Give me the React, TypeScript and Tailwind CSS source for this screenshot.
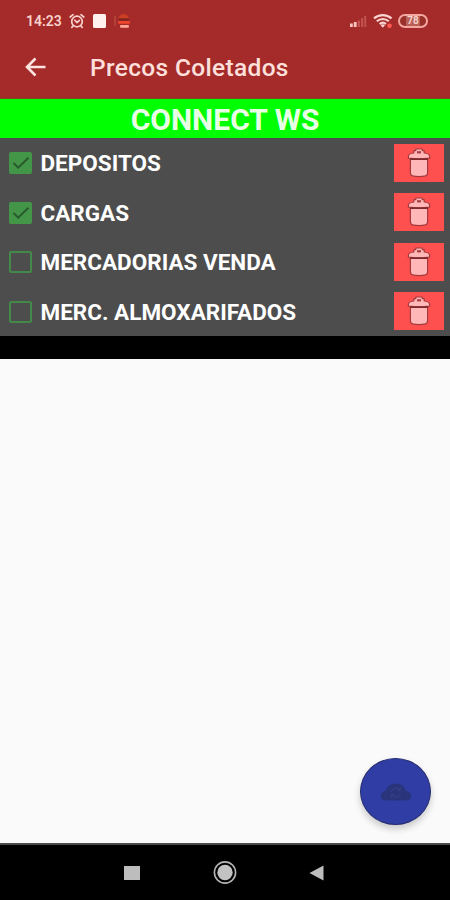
import { useState } from 'react';

interface Table {
  id: string;
  label: string;
  checked: boolean;
}

const initialTables: Table[] = [
  { id: 'depositos', label: 'DEPOSITOS', checked: true },
  { id: 'cargas', label: 'CARGAS', checked: true },
  { id: 'mercadorias', label: 'MERCADORIAS VENDA', checked: false },
  { id: 'almoxarifados', label: 'MERC. ALMOXARIFADOS', checked: false },
];

function StatusBar() {
  return (
    <div className="flex h-[42px] items-center justify-between pl-[26px] pr-[22px] text-[#f8d2cc]">
      <div className="flex items-center">
        <span className="w-[37px] whitespace-nowrap text-[14px] font-semibold leading-none">14:23</span>
        <svg className="ml-[6px]" width="16" height="16" viewBox="0 0 16 16" fill="none" stroke="currentColor" strokeWidth="1.7" strokeLinecap="round">
          <circle cx="8" cy="8.5" r="5.3" />
          <path d="M1.2 4 4 1.7M14.8 4 12 1.7M5.8 7.2 8 9.6l2.4-2.2M4 13l-1.2 1.4M12 13l1.2 1.4" />
        </svg>
        <span className="ml-[8px] h-[14px] w-[13px] rounded-[1.5px] bg-[#fff1ed]" />
        <svg className="ml-[8px]" width="16" height="16" viewBox="0 0 16 16">
          <path d="M1 3v10" stroke="#c4564b" strokeWidth="1" />
          <path d="M4.5 5.2C5 2.7 7 1 9.7 1s4.7 1.7 5.2 4.2z" fill="#cb3f24" />
          <rect x="5" y="5.5" width="10" height="2.4" fill="#7f2720" />
          <rect x="4" y="8" width="12" height="2.8" rx="1" fill="#f0442d" />
          <rect x="6" y="12" width="9" height="2.8" rx="1.2" fill="#ffa795" />
        </svg>
      </div>
      <div className="flex items-center">
        <svg width="18" height="13" viewBox="0 0 18 13">
          <path d="M1 8.5h2.8V12H1zM4.8 7h2.8v5H4.8z" fill="#f9c5bf" />
          <path d="M8.6 5.5h2.4V12H8.6zM12 3h2.2v9H12zM15.2 1h2v11h-2z" fill="#c05350" />
        </svg>
        <svg className="ml-[6px]" width="20" height="16" viewBox="0 0 20 16" fill="none">
          <path d="M1 5.4c5-4.5 12.5-4.5 17.5 0M3.8 8.3c3.5-3.1 8.5-3.1 12 0M6.6 11c2-1.7 4.4-1.7 6.4 0" stroke="#fad5d0" strokeWidth="2.2" />
          <path d="m7.5 12.1 2.3 2.6 2.3-2.6c-1.4-1-3.2-1-4.6 0z" fill="#fad5d0" />
          <circle cx="16.5" cy="12.8" r="2.3" fill="#ff5a50" />
        </svg>
        <div className="ml-[5px] flex h-[14px] w-[30px] items-center justify-center rounded-full border-2 border-[#f4a7a0] bg-[#993029] text-[10px] font-bold leading-none">
          <span className="h-full bg-[#b86058] px-px leading-[10px]">78</span>
        </div>
      </div>
    </div>
  );
}

function Header() {
  return (
    <header className="h-[99px] border-b border-[#7e4b16] bg-[#a52a2a]">
      <StatusBar />
      <div className="flex h-[50px] items-center pl-[25px]">
        <svg width="22" height="22" viewBox="0 0 22 22" fill="none" stroke="#fde3df" strokeWidth="2.6">
          <path d="M20.5 11h-18M10.5 2.5 2 11l8.5 8.5" />
        </svg>
        <h1 className="ml-[43px] mt-[2px] whitespace-nowrap text-[24.5px] font-medium leading-none tracking-[0.33px] text-[#fde0dc]">Precos Coletados</h1>
      </div>
    </header>
  );
}

function TrashIcon() {
  return (
    <svg width="24" height="32" viewBox="0 0 24 32" fill="#ffb7b7" stroke="#a5393c" strokeWidth="1.2" strokeLinejoin="round">
      <path d="M3.4 12h17.2v13.8c0 2-1 3.100-3 3.400-3.600.5-7.600.5-11.200 0-2-.3-3-1.400-3-3.400z" />
      <path d="M6.800 6V3.600h2V2h6.400v1.600h2V6c3.200.3 5.200 1.300 5.400 3.100v2.100c-6.600.8-14.600.8-21.200 0V9.100C1.600 7.300 3.600 6.300 6.800 6z" />
      <path d="M10 4.200h4v2.200h-4z" fill="#a53c3f" stroke="none" />
      <path d="M3 12.200h18" stroke="#7c2a2d" strokeWidth="1.600" />
    </svg>
  );
}

function TableRow({ table, onToggle }: { table: Table; onToggle: () => void }) {
  return (
    <li className="flex h-[49.5px] items-center pl-[9px] pr-[6px]">
      <button
        role="checkbox"
        aria-checked={table.checked}
        aria-label={table.label}
        onClick={onToggle}
        className={`mt-px flex h-[22px] w-[23px] items-center justify-center rounded-[2px] border-2 ${
          table.checked ? 'border-[#439548] bg-[#439548]' : 'border-[#43894a]'
        }`}
      >
        {table.checked && (
          <svg className="shrink-0" width="18" height="14" viewBox="0 0 18 14" fill="none" stroke="#285b2c" strokeWidth="2">
            <path d="m1.5 7 4.7 4.7L16.5 1.8" />
          </svg>
        )}
      </button>
      <span className="ml-[8.5px] mt-[1.5px] flex-1 whitespace-nowrap text-[22.5px] font-bold leading-none text-white">{table.label}</span>
      <button aria-label="Excluir" className="flex h-[38px] w-[50px] items-center justify-center bg-[#ff5050]">
        <TrashIcon />
      </button>
    </li>
  );
}

function NavigationBar() {
  return (
    <nav className="flex h-[57px] items-center border-t-2 border-[#4a4a4a] bg-black pl-[124px]">
      <span className="h-[14px] w-[16px] bg-[#bdbdbd]" />
      <svg className="ml-[73px]" width="24" height="24" viewBox="0 0 24 24">
        <circle cx="12" cy="11.5" r="10.6" fill="none" stroke="#b5b5b5" strokeWidth="1.6" />
        <circle cx="12" cy="11.5" r="7.7" fill="#c2c2c2" />
      </svg>
      <svg className="ml-[72px]" width="15" height="16" viewBox="0 0 15 16">
        <path d="M.5 8 14.5.5v15z" fill="#bdbdbd" />
      </svg>
    </nav>
  );
}

export default function App() {
  const [tables, setTables] = useState(initialTables);

  const toggle = (id: string) =>
    setTables((list) => list.map((t) => (t.id === id ? { ...t, checked: !t.checked } : t)));

  return (
    <div className="flex h-[900px] w-[450px] flex-col overflow-hidden bg-[#fafafa] font-[Roboto,'Liberation_Sans',sans-serif]">
      <Header />
      <button className="h-[39px] shrink-0 bg-[#00ff00] pt-[3px] text-[30px] font-bold leading-none text-[#e9ffe5]">CONNECT WS</button>
      <ul className="h-[198px] shrink-0 bg-[#4d4d4d]">
        {tables.map((table) => (
          <TableRow key={table.id} table={table} onToggle={() => toggle(table.id)} />
        ))}
      </ul>
      <div className="h-[23px] shrink-0 bg-black" />
      <main className="flex flex-1 items-end justify-end pb-[18px] pr-[19px]">
        <button aria-label="Enviar" className="flex h-[67px] w-[71px] items-center justify-center rounded-[50%] border border-[#252b70] bg-[#2f3da4] shadow-[0_4px_7px_rgba(0,0,0,0.2)]">
          <svg width="32" height="20" viewBox="0 0 32 20">
            <path d="M7 18.5c-3.500 0-6-2-6-4.800 0-2.600 2-4.500 4.800-4.900C7.300 4.500 11 1.500 16 1.500s8.700 3 9.700 7.300c3.100.2 5.300 2.200 5.300 4.900 0 2.800-2.400 4.800-5.500 4.800z" fill="#29347a" />
            <path d="M11.5 10a4.700 4.700 0 0 1 8.500-2M20.500 11a4.700 4.700 0 0 1-8.500 2M20.500 5v3.500H17M11.500 16v-3.500H15" fill="none" stroke="#333e84" strokeWidth="1.2" />
          </svg>
        </button>
      </main>
      <NavigationBar />
    </div>
  );
}
